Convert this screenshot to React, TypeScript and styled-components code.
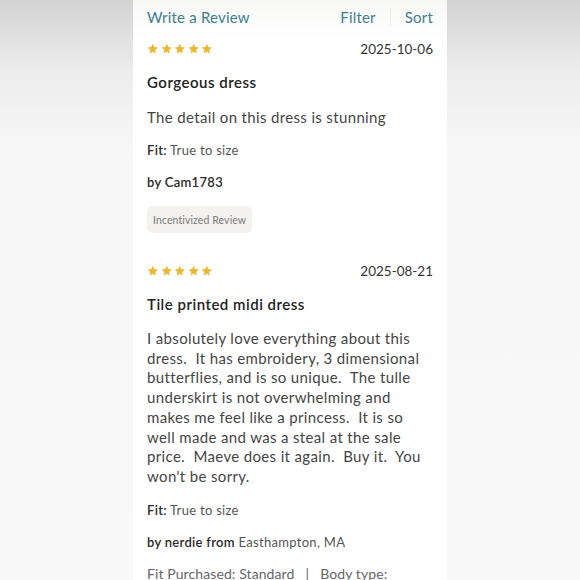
import React from "react";
import styled, { createGlobalStyle } from "styled-components";

const Global = createGlobalStyle`
  html, body { margin: 0; padding: 0; }
  body {
    width: 580px; height: 580px; overflow: hidden;
    font-family: Lato, "Open Sans", sans-serif;
    background: linear-gradient(180deg, #d3d3d3 0px, #ececec 70px, #f7f7f7 150px, #f8f8f8 580px);
  }
`;

const Page = styled.div`
  display: flex;
  justify-content: center;
  height: 580px;
  overflow: hidden;
`;

const Panel = styled.div`
  width: 314px;
  background: linear-gradient(180deg, #f7f8f6 0px, #ffffff 40px);
  padding: 0 14px;
  box-sizing: border-box;
`;

const Header = styled.div`
  height: 34px;
  display: flex;
  align-items: center;
  justify-content: space-between;
  font-size: 15px;
  color: #3e7f8e;
  letter-spacing: 0.2px;
`;

const HeaderRight = styled.div`
  display: flex;
  align-items: center;
`;

const Divider = styled.span`
  width: 1px;
  height: 18px;
  background: #ececea;
  margin: 0 14px 0 14px;
`;

const Review = styled.div`
  padding: 6px 0 23px;
`;

const TopRow = styled.div`
  height: 18px;
  display: flex;
  align-items: center;
  justify-content: space-between;
`;

const Stars = styled.div`
  display: flex;
  gap: 2px;
`;

const DateText = styled.span`
  font-size: 13.5px;
  color: #333;
  letter-spacing: 0px;
`;

const Title = styled.div`
  margin-top: 16px;
  font-size: 15px;
  line-height: 16px;
  font-weight: 600;
  color: #222;
  letter-spacing: 0.5px;
`;

const Body = styled.div<{ $lh?: number }>`
  margin-top: 17px;
  font-size: 15px;
  line-height: ${(p) => p.$lh ?? 20}px;
  color: #454545;
  letter-spacing: 0.35px;
  white-space: pre-wrap;
`;

const Meta = styled.div`
  margin-top: 14px;
  font-size: 13px;
  line-height: 18px;
  color: #555;
  letter-spacing: 0.3px;
`;

const Strong = styled.span`
  font-weight: 600;
  color: #2a2a2a;
`;

const Badge = styled.div`
  margin-top: 15px;
  display: inline-flex;
  align-items: center;
  height: 27px;
  padding: 0 6px;
  border-radius: 6px;
  background: #f3f2ee;
  color: #7a7a7a;
  font-size: 10.5px;
  letter-spacing: 0.1px;
`;

const Extra = styled.div`
  margin-top: 14px;
  font-size: 14px;
  line-height: 18px;
  color: #666;
  letter-spacing: 0.1px;
  white-space: pre;
`;

const Star = () => (
  <svg width="11.5" height="11.5" viewBox="0 0 24 24">
    <path
      d="M12 1.5l3.1 7.1 7.7.7-5.8 5.1 1.7 7.6L12 18l-6.7 4 1.7-7.6-5.8-5.1 7.7-.7z"
      fill="#e9b935"
    />
  </svg>
);

const StarRow = () => (
  <Stars>
    {[0, 1, 2, 3, 4].map((i) => (
      <Star key={i} />
    ))}
  </Stars>
);

export default function App() {
  return (
    <Page>
      <Global />
      <Panel>
        <Header>
          <span>Write a Review</span>
          <HeaderRight>
            <span>Filter</span>
            <Divider />
            <span>Sort</span>
          </HeaderRight>
        </Header>
        <Review>
          <TopRow>
            <StarRow />
            <DateText>2025-10-06</DateText>
          </TopRow>
          <Title>Gorgeous dress</Title>
          <Body>The detail on this dress is stunning</Body>
          <Meta>
            <Strong>Fit:</Strong> True to size
          </Meta>
          <Meta>
            <Strong>by Cam1783</Strong>
          </Meta>
          <Badge>Incentivized Review</Badge>
        </Review>
        <Review>
          <TopRow>
            <StarRow />
            <DateText>2025-08-21</DateText>
          </TopRow>
          <Title>Tile printed midi dress</Title>
          <Body $lh={19.7}>
            I absolutely love everything about this dress.  It has embroidery, 3 dimensional butterflies, and is so unique.  The tulle underskirt is not overwhelming and makes me feel like a princess.  It is so well made and was a steal at the sale price.  Maeve does it again.  Buy it.  You won't be sorry.
          </Body>
          <Meta>
            <Strong>Fit:</Strong> True to size
          </Meta>
          <Meta>
            <Strong>by nerdie from</Strong> Easthampton, MA
          </Meta>
          <Extra>Fit Purchased: Standard   |   Body type:</Extra>
        </Review>
      </Panel>
    </Page>
  );
}
